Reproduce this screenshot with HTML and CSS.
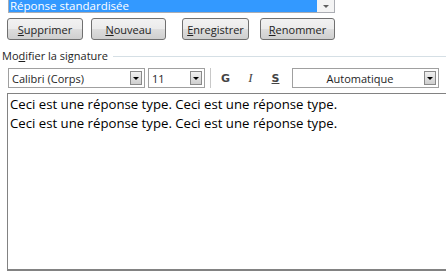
FILE: index.html
```html
<!DOCTYPE html>
<html>
<head>
<meta charset="utf-8">
<link rel="stylesheet" href="styles.css">
</head>
<body>
<div class="page">
  <div class="listbox">
    <div class="row-sel">Réponse standardisée</div>
    <div class="scroll"><span class="arrow small"></span></div>
  </div>
  <div class="buttons">
    <button class="btn b1"><u>S</u>upprimer</button>
    <button class="btn b2"><u>N</u>ouveau</button>
    <button class="btn b3"><u>E</u>nregistrer</button>
    <button class="btn b4"><u>R</u>enommer</button>
  </div>
  <div class="group">
    <span class="glabel">Mo<u>d</u>ifier la signature</span>
    <span class="gline"></span>
  </div>
  <div class="toolbar">
    <div class="combo font"><span class="val">Calibri (Corps)</span><span class="drop"><span class="arrow"></span></span></div>
    <div class="combo size"><span class="val">11</span><span class="drop"><span class="arrow"></span></span></div>
    <span class="sep"></span>
    <span class="fmt bold">G</span>
    <span class="fmt ital">I</span>
    <span class="fmt und">S</span>
    <div class="combo color"><span class="val center">Automatique</span><span class="drop"><span class="arrow"></span></span></div>
  </div>
  <div class="editor">
    <p>Ceci est une réponse type. Ceci est une réponse type.</p>
    <p>Ceci est une réponse type. Ceci est une réponse type.</p>
  </div>
</div>
</body>
</html>
```

FILE: styles.css
```css
html, body {
  margin: 0;
  padding: 0;
  background: #ffffff;
  width: 446px;
  height: 276px;
  overflow: hidden;
}
.page {
  font-family: "Open Sans", "Noto Sans", sans-serif;
  font-size: 11px;
  color: #1e1e1e;
}
.listbox {
  margin-left: 8px;
  width: 325px;
  height: 12px;
  display: flex;
  border: 1px solid #abadb3;
  border-top: none;
}
.row-sel {
  flex: 1;
  background: #3399ff;
  color: #ffffff;
  font-size: 11.5px;
  line-height: 12px;
  height: 12px;
  padding-left: 1px;
}
.scroll {
  width: 17px;
  background: #f4f4f4;
  display: flex;
  justify-content: center;
  align-items: center;
}
.arrow {
  width: 0;
  height: 0;
  border-left: 4px solid transparent;
  border-right: 4px solid transparent;
  border-top: 4px solid #000;
}
.arrow.small {
  border-left-width: 3px;
  border-right-width: 3px;
  border-top: 3px solid #606060;
}
.buttons {
  display: flex;
  margin-top: 5px;
  height: 22px;
}
.btn {
  font-family: "Open Sans", "Noto Sans", sans-serif;
  font-size: 11px;
  color: #1e1e1e;
  height: 22px;
  padding: 0;
  border: 1px solid #707070;
  border-radius: 3px;
  background: linear-gradient(#f2f2f2 0%, #ebebeb 50%, #dddddd 51%, #cfcfcf 100%);
}
.b1 { margin-left: 7px; width: 76px; }
.b2 { margin-left: 8px; width: 75px; }
.b3 { margin-left: 16px; width: 67px; }
.b4 { margin-left: 11px; width: 75px; }
.group {
  display: flex;
  align-items: center;
  margin-top: 8px;
  height: 15px;
}
.glabel {
  padding-left: 2px;
  font-size: 11px;
  white-space: nowrap;
}
.gline {
  flex: 1;
  height: 1px;
  background: #d5dfe5;
  margin-left: 5px;
  margin-top: 1px;
}
.toolbar {
  display: flex;
  align-items: center;
  margin-top: 5px;
  height: 20px;
}
.combo {
  border: 1px solid #a0a0a0;
  display: flex;
  align-items: center;
  background: #fff;
  box-sizing: border-box;
  height: 20px;
}
.combo .val {
  flex: 1;
  padding-left: 3px;
  font-size: 11px;
  white-space: nowrap;
}
.combo .val.center {
  text-align: center;
}
.drop {
  width: 12px;
  height: 14px;
  margin-right: 2px;
  border: 1px solid #8a8a8a;
  background: linear-gradient(#f0f0f0, #cfcfcf);
  display: flex;
  align-items: center;
  justify-content: center;
  box-sizing: border-box;
}
.drop .arrow {
  border-left-width: 3px;
  border-right-width: 3px;
  border-top-width: 3px;
}
.font { margin-left: 8px; width: 137px; }
.size { margin-left: 3px; width: 57px; }
.sep {
  width: 1px;
  height: 20px;
  background: #c8c8c8;
  margin-left: 5px;
  margin-right: 2px;
}
.fmt {
  width: 25px;
  text-align: center;
  font-size: 12px;
  color: #444;
  font-family: "DejaVu Sans", sans-serif;
}
.bold { font-weight: bold; font-size: 11px; }
.ital { font-style: italic; font-family: "Liberation Serif", serif; font-size: 13px; }
.und { text-decoration: underline; font-weight: bold; font-size: 11px; }
.color { margin-left: 4px; width: 147px; }
.editor {
  margin-top: 5px;
  margin-left: 7px;
  width: 460px;
  height: 174px;
  border: 1px solid #828282;
  border-width: 1px 0 2px 1px;
  padding: 1px 0 0 2px;
  font-family: "Open Sans", "Noto Sans", sans-serif;
  font-size: 13.2px;
  color: #000;
}
.editor p {
  margin: 0;
  line-height: 19px;
}
```
